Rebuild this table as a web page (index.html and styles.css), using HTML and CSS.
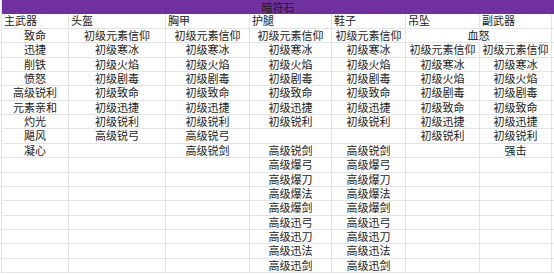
FILE: index.html
```html
<!DOCTYPE html>
<html lang="zh">
<head>
<meta charset="utf-8">
<title>暗符石</title>
<link rel="stylesheet" href="styles.css">
</head>
<body>
<div class="sheet">
  <div class="t">暗符石</div>

  <div class="h">主武器</div><div class="h">头盔</div><div class="h">胸甲</div><div class="h">护腿</div><div class="h">鞋子</div><div class="h">吊坠</div><div class="h">副武器</div><div class="e"></div>

  <div class="c">致命</div><div class="c">初级元素信仰</div><div class="c">初级元素信仰</div><div class="c">初级元素信仰</div><div class="c">初级元素信仰</div><div class="c m">血怒</div><div class="e"></div>

  <div class="c">迅捷</div><div class="c">初级寒冰</div><div class="c">初级寒冰</div><div class="c">初级寒冰</div><div class="c">初级寒冰</div><div class="c">初级元素信仰</div><div class="c">初级元素信仰</div><div class="e"></div>

  <div class="c">削铁</div><div class="c">初级火焰</div><div class="c">初级火焰</div><div class="c">初级火焰</div><div class="c">初级火焰</div><div class="c">初级寒冰</div><div class="c">初级寒冰</div><div class="e"></div>

  <div class="c">愤怒</div><div class="c">初级剧毒</div><div class="c">初级剧毒</div><div class="c">初级剧毒</div><div class="c">初级剧毒</div><div class="c">初级火焰</div><div class="c">初级火焰</div><div class="e"></div>

  <div class="c">高级锐利</div><div class="c">初级致命</div><div class="c">初级致命</div><div class="c">初级致命</div><div class="c">初级致命</div><div class="c">初级剧毒</div><div class="c">初级剧毒</div><div class="e"></div>

  <div class="c">元素亲和</div><div class="c">初级迅捷</div><div class="c">初级迅捷</div><div class="c">初级迅捷</div><div class="c">初级迅捷</div><div class="c">初级致命</div><div class="c">初级致命</div><div class="e"></div>

  <div class="c">灼光</div><div class="c">初级锐利</div><div class="c">初级锐利</div><div class="c">初级锐利</div><div class="c">初级锐利</div><div class="c">初级迅捷</div><div class="c">初级迅捷</div><div class="e"></div>

  <div class="c">飓风</div><div class="c">高级锐弓</div><div class="c">高级锐弓</div><div class="c"></div><div class="c"></div><div class="c">初级锐利</div><div class="c">初级锐利</div><div class="e"></div>

  <div class="c">凝心</div><div class="c"></div><div class="c">高级锐剑</div><div class="c">高级锐剑</div><div class="c">高级锐剑</div><div class="c"></div><div class="c">强击</div><div class="e"></div>

  <div class="c"></div><div class="c"></div><div class="c"></div><div class="c">高级爆弓</div><div class="c">高级爆弓</div><div class="c"></div><div class="c"></div><div class="e"></div>

  <div class="c"></div><div class="c"></div><div class="c"></div><div class="c">高级爆刀</div><div class="c">高级爆刀</div><div class="c"></div><div class="c"></div><div class="e"></div>

  <div class="c"></div><div class="c"></div><div class="c"></div><div class="c">高级爆法</div><div class="c">高级爆法</div><div class="c"></div><div class="c"></div><div class="e"></div>

  <div class="c"></div><div class="c"></div><div class="c"></div><div class="c">高级爆剑</div><div class="c">高级爆剑</div><div class="c"></div><div class="c"></div><div class="e"></div>

  <div class="c"></div><div class="c"></div><div class="c"></div><div class="c">高级迅弓</div><div class="c">高级迅弓</div><div class="c"></div><div class="c"></div><div class="e"></div>

  <div class="c"></div><div class="c"></div><div class="c"></div><div class="c">高级迅刀</div><div class="c">高级迅刀</div><div class="c"></div><div class="c"></div><div class="e"></div>

  <div class="c"></div><div class="c"></div><div class="c"></div><div class="c">高级迅法</div><div class="c">高级迅法</div><div class="c"></div><div class="c"></div><div class="e"></div>

  <div class="c"></div><div class="c"></div><div class="c"></div><div class="c">高级迅剑</div><div class="c">高级迅剑</div><div class="c"></div><div class="c"></div><div class="e"></div>
</div>
</body>
</html>
```

FILE: styles.css
```css
html, body {
  margin: 0;
  background: #ffffff;
}

body {
  font-family: "Noto Sans CJK SC", "Noto Sans", sans-serif;
  font-size: 11px;
  color: #222222;
  overflow: hidden;
}

.sheet {
  display: grid;
  grid-template-columns: 67px 97px 84px 82px 74px 74px 72px 2px;
  grid-auto-rows: 14.38px;
  width: max-content;
  margin-left: 1px;
  border-left: 1px solid #e3e3e3;
}

.sheet > div {
  box-sizing: border-box;
  border-right: 1px solid #e3e3e3;
  border-bottom: 1px solid #e3e3e3;
  white-space: nowrap;
  line-height: 13px;
}

.sheet > .t {
  grid-column: 1 / -1;
  background: #7030a0;
  border: none;
  line-height: 14px;
  text-align: center;
  color: #1e1a22;
}

.h {
  text-align: left;
  padding-left: 2px;
}

.c {
  text-align: center;
}

.m {
  grid-column: span 2;
}

.sheet > .e {
  border-right: none;
}
```
